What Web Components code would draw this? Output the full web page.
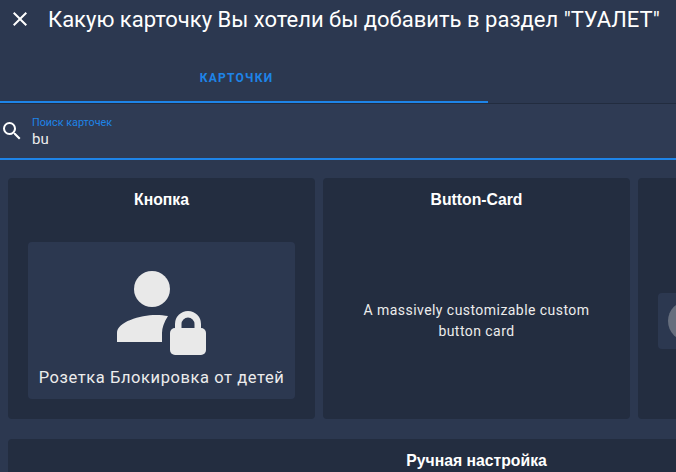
<!DOCTYPE html>
<html>
<head>
<meta charset="utf-8">
<style>
    html, body {
        margin: 0;
        height: 100%;
        overflow: hidden;
        background: #2c3850;
    }
</style>
</head>
<body>
<card-dialog>
    <dialog-header slot="header">Какую карточку Вы хотели бы добавить в раздел "ТУАЛЕТ"</dialog-header>
    <dialog-tabs slot="tabs" label="Карточки"></dialog-tabs>
    <search-field slot="search" label="Поиск карточек" value="bu"></search-field>
    <picker-card title-text="Кнопка">
        <entity-button name="Розетка Блокировка от детей"></entity-button>
    </picker-card>
    <picker-card title-text="Button-Card">
        <p-note>A massively customizable custom button card</p-note>
    </picker-card>
    <picker-card>
        <side-preview></side-preview>
    </picker-card>
    <picker-card class="wide" title-text="Ручная настройка"></picker-card>
</card-dialog>

<script>
customElements.define(
    'card-dialog',
    class extends HTMLElement {
        constructor() {
            super()

            const shadow = this.attachShadow({ mode: 'open' })

            shadow.innerHTML = `
                <style>
                    :host {
                        display: block;
                        width: 976px;
                        height: 472px;
                        overflow: hidden;
                        color: #ececec;
                        font-family: Roboto, sans-serif;
                    }
                    .grid {
                        display: grid;
                        grid-template-columns: repeat(3, 307px);
                        grid-auto-rows: 241px;
                        gap: 20px 8px;
                        padding: 18px 8px 0;
                    }
                    ::slotted(.wide) {
                        grid-column: 1 / -1;
                    }
                </style>
                <slot name="header"></slot>
                <slot name="tabs"></slot>
                <slot name="search"></slot>
                <div class="grid"><slot></slot></div>
            `
        }
    }
)

customElements.define(
    'dialog-header',
    class extends HTMLElement {
        constructor() {
            super()

            const shadow = this.attachShadow({ mode: 'open' })

            shadow.innerHTML = `
                <style>
                    :host {
                        display: flex;
                        align-items: center;
                        height: 38px;
                        color: #fff;
                    }
                    svg {
                        width: 24px;
                        height: 24px;
                        margin-left: 8px;
                        flex: none;
                    }
                    .title {
                        margin-left: 16px;
                        font-size: 22px;
                        white-space: nowrap;
                    }
                </style>
                <svg viewBox="0 0 24 24" fill="currentColor">
                    <path d="M19 6.41 17.59 5 12 10.59 6.41 5 5 6.41 10.59 12 5 17.59 6.41 19 12 13.41 17.59 19 19 17.59 13.41 12z"/>
                </svg>
                <div class="title"><slot></slot></div>
            `
        }
    }
)

customElements.define(
    'dialog-tabs',
    class extends HTMLElement {
        constructor() {
            super()

            const shadow = this.attachShadow({ mode: 'open' })

            shadow.innerHTML = `
                <style>
                    :host {
                        display: block;
                        height: 65px;
                        border-bottom: 1px solid #222c3f;
                    }
                    .tab {
                        box-sizing: border-box;
                        display: flex;
                        align-items: center;
                        justify-content: center;
                        width: 488px;
                        height: 65px;
                        padding: 17px 15px 0 0;
                        border-bottom: 2px solid #1e84e8;
                        color: #1e84e8;
                        font-size: 12px;
                        font-weight: 700;
                        letter-spacing: 1.25px;
                        text-transform: uppercase;
                    }
                </style>
                <div class="tab" id="tab"></div>
            `
            shadow.getElementById('tab').textContent = this.getAttribute('label')
        }
    }
)

customElements.define(
    'search-field',
    class extends HTMLElement {
        constructor() {
            super()

            const shadow = this.attachShadow({ mode: 'open' })

            shadow.innerHTML = `
                <style>
                    :host {
                        display: flex;
                        align-items: center;
                        height: 54px;
                        background: #2f3b54;
                        border-bottom: 2px solid #1e84e8;
                    }
                    svg {
                        width: 24px;
                        height: 24px;
                        flex: none;
                    }
                    .text {
                        margin-left: 8px;
                        padding-top: 4px;
                        display: flex;
                        flex-direction: column;
                    }
                    .label {
                        color: #1e84e8;
                        font-size: 10.8px;
                        line-height: 12px;
                    }
                    .value {
                        font-size: 15px;
                        line-height: 20px;
                    }
                </style>
                <svg viewBox="0 0 24 24" fill="#fff">
                    <path d="M9.5 3A6.5 6.5 0 0 1 16 9.5c0 1.61-.59 3.09-1.56 4.23l.27.27h.79l5 5-1.5 1.5-5-5v-.79l-.27-.27A6.516 6.516 0 0 1 9.5 16 6.5 6.5 0 0 1 3 9.5 6.5 6.5 0 0 1 9.5 3m0 2C7 5 5 7 5 9.5S7 14 9.5 14 14 12 14 9.5 12 5 9.5 5z"/>
                </svg>
                <div class="text">
                    <div class="label" id="label"></div>
                    <div class="value" id="value"></div>
                </div>
            `
            shadow.getElementById('label').textContent = this.getAttribute('label')
            shadow.getElementById('value').textContent = this.getAttribute('value')
        }
    }
)

customElements.define(
    'picker-card',
    class extends HTMLElement {
        constructor() {
            super()

            const shadow = this.attachShadow({ mode: 'open' })

            shadow.innerHTML = `
                <style>
                    :host {
                        display: flex;
                        flex-direction: column;
                        background: #232d40;
                        border-radius: 4px;
                        min-width: 0;
                    }
                    .title {
                        height: 42px;
                        padding-top: 12px;
                        box-sizing: border-box;
                        text-align: center;
                        color: #fff;
                        font: bold 15.75px/19px "Liberation Sans", sans-serif;
                    }
                    .body {
                        flex: 1;
                        display: flex;
                        align-items: center;
                        padding: 22px 20px 20px;
                    }
                </style>
                <div class="title" id="title"></div>
                <div class="body"><slot></slot></div>
            `
            shadow.getElementById('title').textContent = this.getAttribute('title-text') ?? ''
        }
    }
)

customElements.define(
    'entity-button',
    class extends HTMLElement {
        constructor() {
            super()

            const shadow = this.attachShadow({ mode: 'open' })

            shadow.innerHTML = `
                <style>
                    :host {
                        flex: 1;
                        display: flex;
                        flex-direction: column;
                        align-items: center;
                        height: 157px;
                        background: #2c3850;
                        border-radius: 4px;
                    }
                    svg {
                        display: block;
                        width: 97px;
                        height: 97px;
                        margin-top: 19px;
                    }
                    .name {
                        margin-top: 10px;
                        font-size: 16.5px;
                        line-height: 20px;
                        letter-spacing: 0.58px;
                        white-space: nowrap;
                    }
                </style>
                <svg viewBox="113 261 97 97" fill="#e9e9e9">
                    <circle cx="152" cy="289" r="18"/>
                    <path d="M117 342v-9c0-11 23-18 39-18 4 0 9 .5 12 1-4 6-6 12-6 17v9z"/>
                    <path d="M175 328v-4a13 13 0 0 1 26 0v4h-6.500v-4a6.500 6.500 0 0 0-13 0v4z"/>
                    <rect x="170" y="328" width="36" height="27" rx="5"/>
                </svg>
                <div class="name" id="name"></div>
            `
            shadow.getElementById('name').textContent = this.getAttribute('name')
        }
    }
)

customElements.define(
    'p-note',
    class extends HTMLElement {
        constructor() {
            super()

            const shadow = this.attachShadow({ mode: 'open' })

            shadow.innerHTML = `
                <style>
                    :host {
                        display: block;
                        flex: 1;
                        padding: 0 10px;
                        text-align: center;
                        font-size: 14px;
                        line-height: 21px;
                        letter-spacing: 0.45px;
                    }
                </style>
                <slot></slot>
            `
        }
    }
)

customElements.define(
    'side-preview',
    class extends HTMLElement {
        constructor() {
            super()

            const shadow = this.attachShadow({ mode: 'open' })

            shadow.innerHTML = `
                <style>
                    :host {
                        flex: 1;
                        display: flex;
                        align-items: center;
                        height: 56px;
                        background: #2c3850;
                        border-radius: 4px;
                    }
                    .dot {
                        width: 40px;
                        height: 40px;
                        margin-left: 10px;
                        border-radius: 50%;
                        background: #666e7d;
                    }
                </style>
                <div class="dot"></div>
            `
        }
    }
)
</script>
</body>
</html>
